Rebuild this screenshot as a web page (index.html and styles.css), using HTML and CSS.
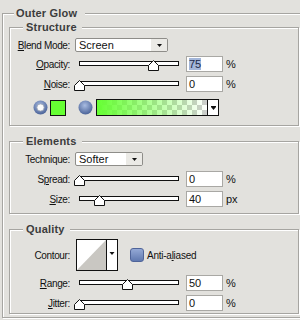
FILE: index.html
```html
<!DOCTYPE html>
<html lang="en">

<head>
  <meta charset="UTF-8">
  <title>Outer Glow</title>
  <link rel="stylesheet" href="styles.css">
</head>

<body>
  <fieldset class="group outer">
    <legend>Outer Glow</legend>

    <!-- Structure -->
    <fieldset class="group inner">
      <legend>Structure</legend>
      <div class="row first">
        <span class="lbl"><u>B</u>lend Mode:</span>
        <div class="select blend">
          <span class="val">Screen</span>
          <span class="btn"><svg width="5" height="3"><polygon points="0,0 5,0 2.5,3" fill="#111" /></svg></span>
        </div>
      </div>
      <div class="row">
        <span class="lbl"><u>O</u>pacity:</span>
        <div class="slider"><div class="track"><svg class="thumb" style="left: 75%" width="11" height="11"><polygon points="5.5,0.5 10.5,5.5 10.5,10.5 0.5,10.5 0.5,5.5" fill="#fff" stroke="#111" /></svg></div></div>
        <div class="num"><span class="hl">75</span></div>
        <span class="unit">%</span>
      </div>
      <div class="row">
        <span class="lbl"><u>N</u>oise:</span>
        <div class="slider"><div class="track"><svg class="thumb" style="left: 0%" width="11" height="11"><polygon points="5.5,0.5 10.5,5.5 10.5,10.5 0.5,10.5 0.5,5.5" fill="#fff" stroke="#111" /></svg></div></div>
        <div class="num">0</div>
        <span class="unit">%</span>
      </div>
      <div class="row colors">
        <svg class="radio" width="15" height="15">
          <defs>
            <radialGradient id="ball" cx="45%" cy="35%" r="65%">
              <stop offset="0" stop-color="#a9bce2" />
              <stop offset="1" stop-color="#4b6398" />
            </radialGradient>
          </defs>
          <circle cx="7.5" cy="7.5" r="7" fill="url(#ball)" />
          <circle cx="7.5" cy="7.5" r="3.6" fill="#fbfbfb" stroke="#9aa3b3" stroke-width="0.8" />
        </svg>
        <div class="swatch"></div>
        <svg class="radio second" width="15" height="15">
          <circle cx="7.5" cy="7.5" r="7" fill="url(#ball)" />
        </svg>
        <div class="grad">
          <div class="grad-fill"></div>
          <div class="grad-btn"><svg width="5" height="4"><rect x="0" y="0" width="5" height="1" fill="#111" /><polygon points="0,1 5,1 2.5,4" fill="#111" /></svg></div>
        </div>
      </div>
    </fieldset>

    <!-- Elements -->
    <fieldset class="group inner">
      <legend>Elements</legend>
      <div class="row first">
        <span class="lbl">Technique:</span>
        <div class="select technique">
          <span class="val">Softer</span>
          <span class="btn"><svg width="5" height="3"><polygon points="0,0 5,0 2.5,3" fill="#111" /></svg></span>
        </div>
      </div>
      <div class="row wide">
        <span class="lbl">S<u>p</u>read:</span>
        <div class="slider"><div class="track"><svg class="thumb" style="left: 0%" width="11" height="11"><polygon points="5.5,0.5 10.5,5.5 10.5,10.5 0.5,10.5 0.5,5.5" fill="#fff" stroke="#111" /></svg></div></div>
        <div class="num">0</div>
        <span class="unit">%</span>
      </div>
      <div class="row">
        <span class="lbl"><u>S</u>ize:</span>
        <div class="slider"><div class="track"><svg class="thumb" style="left: 20%" width="11" height="11"><polygon points="5.5,0.5 10.5,5.5 10.5,10.5 0.5,10.5 0.5,5.5" fill="#fff" stroke="#111" /></svg></div></div>
        <div class="num">40</div>
        <span class="unit">px</span>
      </div>
    </fieldset>

    <!-- Quality -->
    <fieldset class="group inner last">
      <legend>Quality</legend>
      <div class="row contour-row">
        <span class="lbl">Contour:</span>
        <svg class="contour" width="42" height="32">
          <rect x="0.5" y="0.5" width="41" height="31" fill="#fff" stroke="#111" />
          <polygon points="1,31 30,1 30,31" fill="#c9c7c2" />
          <line x1="30.5" y1="0" x2="30.5" y2="32" stroke="#111" />
          <polygon points="33.5,13 38.5,13 36,16" fill="#111" />
        </svg>
        <div class="check"></div>
        <span class="check-lbl">Anti-a<u>l</u>iased</span>
      </div>
      <div class="row">
        <span class="lbl"><u>R</u>ange:</span>
        <div class="slider"><div class="track"><svg class="thumb" style="left: 49%" width="11" height="11"><polygon points="5.5,0.5 10.5,5.5 10.5,10.5 0.5,10.5 0.5,5.5" fill="#fff" stroke="#111" /></svg></div></div>
        <div class="num">50</div>
        <span class="unit">%</span>
      </div>
      <div class="row">
        <span class="lbl"><u>J</u>itter:</span>
        <div class="slider"><div class="track"><svg class="thumb" style="left: 0%" width="11" height="11"><polygon points="5.5,0.5 10.5,5.5 10.5,10.5 0.5,10.5 0.5,5.5" fill="#fff" stroke="#111" /></svg></div></div>
        <div class="num">0</div>
        <span class="unit">%</span>
      </div>
    </fieldset>
  </fieldset>
</body>

</html>
```

FILE: styles.css
```css
html {
  overflow: hidden;
}

body {
  margin: 0;
  width: 300px;
  height: 320px;
  background-color: #e2e1dd;
  font-family: "Liberation Sans", Arial, sans-serif;
  font-size: 10px;
  color: #111;
}

/* Рамки групп */
.group {
  margin: 0;
  padding: 0;
  border: 1px solid #a6a5a1;
  box-shadow: inset 1px 1px 0 #fff, 1px 1px 0 #fff;
  min-width: 0;
}

.group > legend {
  font-size: 11px;
  font-weight: bold;
  line-height: 13px;
  letter-spacing: 0.2px;
  color: #3c3c3c;
  background-color: #e2e1dd;
}

/* Внешняя рамка уходит за правый край */
.outer {
  margin: 7px 0 0 2px;
  padding: 1px 0 3px 6px;
  border-right: none;
}

.outer > legend {
  margin-left: 5px;
  padding: 0 8px 0 2px;
}

.inner {
  box-sizing: border-box;
  width: 290px;
  padding: 0 0 6px 0;
}

.inner + .inner {
  margin-top: 9px;
}

.inner > legend {
  margin-left: 13px;
  padding: 0 5px 0 3px;
}

.inner:first-of-type {
  padding-bottom: 9px;
}

.inner.last {
  padding-bottom: 2px;
}

/* Строки */
.row {
  display: flex;
  align-items: center;
  height: 16px;
  margin-top: 4px;
}

.row.first {
  height: 14px;
}

.row.wide {
  margin-top: 5px;
}

.lbl {
  flex: none;
  width: 60px;
  margin-right: 5px;
  text-align: right;
  white-space: nowrap;
  letter-spacing: -0.35px;
}

u {
  text-underline-offset: 1px;
}

/* Выпадающие списки */
.select {
  display: flex;
  box-sizing: border-box;
  height: 14px;
  border: 1px solid #8e8d89;
  border-radius: 2px;
  background-color: #fff;
  overflow: hidden;
}

.select.blend {
  width: 93px;
}

.select.technique {
  width: 68px;
}

.select .val {
  flex: 1;
  padding-left: 3px;
  font-size: 11px;
  line-height: 12px;
}

.select .btn {
  display: flex;
  align-items: center;
  justify-content: center;
  width: 16px;
  background-color: #ebeae6;
}

/* Ползунки */
.slider {
  flex: none;
  width: 108px;
  height: 16px;
}

.track {
  position: relative;
  box-sizing: border-box;
  height: 5px;
  margin: 5px 4px 0;
  border: 1px solid #111;
  background-color: #fff;
}

.thumb {
  position: absolute;
  top: -2px;
  margin-left: -6px;
  display: block;
}

/* Поля ввода */
.num {
  flex: none;
  box-sizing: border-box;
  width: 37px;
  height: 16px;
  margin-left: 3px;
  padding-left: 2px;
  border: 1px solid #a9a8a4;
  background-color: #fff;
  font-size: 11px;
  line-height: 14px;
}

.hl {
  background-color: #a3b6d9;
  color: #1b2a4a;
}

.unit {
  margin-left: 3px;
  font-size: 11px;
}

/* Цвет свечения */
.row.colors {
  height: 17px;
  margin-top: 7px;
  padding-left: 23px;
}

.radio {
  display: block;
  flex: none;
}

.radio.second {
  margin-left: 12px;
}

.swatch {
  box-sizing: border-box;
  width: 16px;
  height: 16px;
  margin-left: 2px;
  border: 1px solid #111;
  background-color: #66ff33;
}

.grad {
  display: flex;
  box-sizing: border-box;
  width: 123px;
  height: 17px;
  margin-left: 3px;
  border: 1px solid #111;
}

.grad-fill {
  flex: 1;
  background-color: #fff;
  background-image:
    linear-gradient(to right, #66ff33, rgba(102, 255, 51, 0)),
    linear-gradient(45deg, #cdcdcd 25%, transparent 25%, transparent 75%, #cdcdcd 75%),
    linear-gradient(45deg, #cdcdcd 25%, transparent 25%, transparent 75%, #cdcdcd 75%);
  background-size: 100% 100%, 10px 10px, 10px 10px;
  background-position: 0 0, 0 0, 5px 5px;
}

.grad-btn {
  display: flex;
  align-items: center;
  justify-content: center;
  width: 10px;
  border-left: 1px solid #111;
  background-color: #fff;
}

/* Качество */
.row.contour-row {
  height: 32px;
  margin-top: 3px;
}

.contour {
  display: block;
  margin-left: 1px;
}

.check {
  box-sizing: border-box;
  width: 14px;
  height: 14px;
  margin-left: 12px;
  border: 1px solid #4f6499;
  border-radius: 3px;
  background: linear-gradient(#94a9d6, #6079b0);
}

.check-lbl {
  margin-left: 3px;
  letter-spacing: -0.25px;
}
```
